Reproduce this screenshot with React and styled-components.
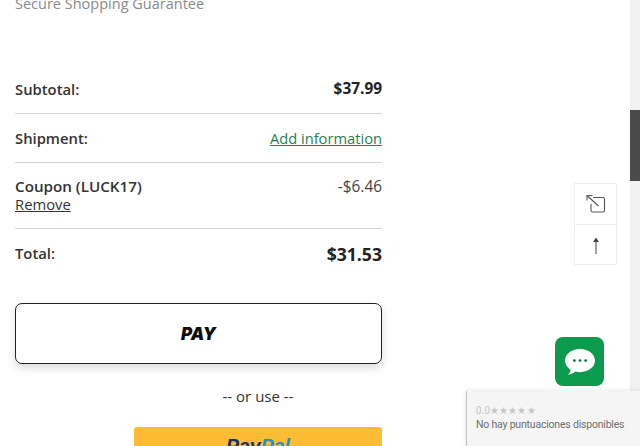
import React from 'react';
import styled, { createGlobalStyle } from 'styled-components';

const GlobalStyle = createGlobalStyle`
    html, body {
        margin: 0;
        height: 446px;
        overflow: hidden;
        background: #fff;
        font-family: "Open Sans", "Liberation Sans", sans-serif;
        color: #222;
    }
`;

const Page = styled.div`
    position: relative;
    display: flex;
    width: 640px;
    height: 446px;
    overflow: hidden;
`;

const Main = styled.main`
    flex: 1;
    padding: 0 0 0 15px;
    margin-top: -6px;
`;

const Column = styled.div`
    width: 367px;
`;

const Guarantee = styled.div`
    font-size: 14.5px;
    line-height: 20px;
    color: #8a8a8a;
    margin-bottom: 51px;
`;

const Row = styled.div`
    display: flex;
    justify-content: space-between;
    align-items: ${(props) => props.top ? 'flex-start' : 'center'};
    height: ${(props) => props.height}px;
    padding-top: ${(props) => props.pad || 0}px;
    box-sizing: border-box;
    border-bottom: ${(props) => props.last ? 'none' : '1px solid #d2d2d2'};
    font-size: 14.8px;
`;

const Label = styled.span`
    font-weight: 600;
    font-size: ${(props) => props.size || 14.8}px;
    color: #333;
    line-height: 18px;
    display: block;
    margin-bottom: ${(props) => props.lift || 0}px;
`;

const Amount = styled.span`
    font-weight: ${(props) => props.light ? 400 : 700};
    font-size: ${(props) => props.size || 15.4}px;
    color: ${(props) => props.light ? '#444' : '#222'};
    line-height: 18px;
    margin-top: ${(props) => props.light ? 1 : 0}px;
`;

const GreenLink = styled.a`
    color: #1f8052;
    text-decoration: underline;
    font-size: 14.7px;
`;

const RemoveLink = styled.a`
    display: block;
    color: #333;
    text-decoration: underline;
    font-size: 14.8px;
    line-height: 18px;
`;

const PayButton = styled.button`
    display: block;
    width: 100%;
    height: 61px;
    margin-top: 24px;
    border: 1px solid #222;
    border-radius: 7px;
    background: #fff;
    box-shadow: 0 4px 10px rgba(0, 0, 0, 0.14);
    font-family: Inter, sans-serif;
    font-size: 17px;
    font-style: italic;
    font-weight: 900;
    color: #0c0c0c;
`;

const AltPay = styled.div`
    margin: 23px 0 0 119px;
    text-align: center;
`;

const OrUse = styled.div`
    font-size: 15px;
    line-height: 18px;
    color: #333;
    margin-bottom: 22px;
`;

const PayPalButton = styled.div`
    height: 40px;
    background: #fdbc36;
    border-radius: 3px;
    font-family: "Liberation Sans", sans-serif;
    font-size: 19.5px;
    font-style: italic;
    font-weight: 700;
    line-height: 38px;
    color: #14316f;
`;

const PayPalTail = styled.span`
    color: #1f94c4;
`;

const ScrollTrack = styled.div`
    width: 10px;
    background: #f1f1f1;
    padding-top: 110px;
`;

const ScrollThumb = styled.div`
    height: 71px;
    background: #4b4b4b;
`;

const ToolStack = styled.div`
    position: absolute;
    left: 574px;
    top: 183px;
    width: 43px;
    display: flex;
    flex-direction: column;
    background: #fff;
    border: 1px solid #eeeeee;
    box-sizing: border-box;
`;

const ToolButton = styled.div`
    height: 40px;
    box-sizing: border-box;
    display: flex;
    align-items: center;
    justify-content: center;
    border-top: ${(props) => props.divided ? '1px solid #eeeeee' : 'none'};
`;

const ChatButton = styled.div`
    position: absolute;
    left: 555px;
    top: 337px;
    width: 49px;
    height: 49px;
    border-radius: 8px;
    background: #0c9a4f;
    display: flex;
    align-items: center;
    justify-content: center;
`;

const Recaptcha = styled.div`
    position: absolute;
    left: 466px;
    top: 391px;
    width: 174px;
    height: 55px;
    box-sizing: border-box;
    padding: 13px 0 0 9px;
    background: #f5f5f5;
    border-left: 1px solid #c4c4c4;
    box-shadow: 0 0 5px rgba(0, 0, 0, 0.12);
    font-family: Roboto, "Liberation Sans", sans-serif;
`;

const Score = styled.div`
    font-size: 10px;
    line-height: 13px;
    color: #c6c6c6;
    letter-spacing: 0.1px;
`;

const NoRatings = styled.div`
    font-size: 10.5px;
    line-height: 14px;
    margin-top: 1px;
    color: #6e6e6e;
    white-space: nowrap;
    letter-spacing: -0.2px;
`;

export default function App() {
    return (
        <Page>
            <GlobalStyle />
            <Main>
                <Column>
                    <Guarantee>Secure Shopping Guarantee</Guarantee>
                    <Row height={49}>
                        <Label>Subtotal:</Label>
                        <Amount>$37.99</Amount>
                    </Row>
                    <Row height={49}>
                        <Label>Shipment:</Label>
                        <GreenLink>Add information</GreenLink>
                    </Row>
                    <Row height={66} top pad={14}>
                        <div>
                            <Label size={15.2}>Coupon (LUCK17)</Label>
                            <RemoveLink>Remove</RemoveLink>
                        </div>
                        <Amount light>-$6.46</Amount>
                    </Row>
                    <Row height={50} last>
                        <Label lift={2}>Total:</Label>
                        <Amount size={17.6}>$31.53</Amount>
                    </Row>
                    <PayButton>PAY</PayButton>
                    <AltPay>
                        <OrUse>-- or use --</OrUse>
                        <PayPalButton>
                            Pay<PayPalTail>Pal</PayPalTail>
                        </PayPalButton>
                    </AltPay>
                </Column>
            </Main>
            <ScrollTrack>
                <ScrollThumb />
            </ScrollTrack>
            <ToolStack>
                <ToolButton>
                    <svg width="22" height="22" viewBox="0 0 22 22" fill="none" stroke="#555" strokeWidth="1.1">
                        <path d="M8 4.5h10a1.5 1.5 0 0 1 1.5 1.5v11.5a1.5 1.5 0 0 1-1.5 1.5H7.5A1.5 1.5 0 0 1 6 17.5V11" />
                        <path d="M13.5 13L2.5 3" />
                        <path d="M2 7.5V2.5H7.5" />
                    </svg>
                </ToolButton>
                <ToolButton divided>
                    <svg width="14" height="22" viewBox="0 0 14 22" fill="none" stroke="#555" strokeWidth="1.1">
                        <path d="M7 20V5" />
                        <path d="M4 8L7 3.5l3 4.5z" fill="#444" stroke="none" />
                    </svg>
                </ToolButton>
            </ToolStack>
            <ChatButton>
                <svg width="34" height="30" viewBox="0 0 36 32">
                    <path d="M18 2C8.6 2 2 7.6 2 14.5c0 4.2 2.4 7.7 6 10-.3 2-1.4 3.8-3 5 3.2-.2 6-1.4 8-3.3 1.6.4 3.2.6 5 .6 9.4 0 16-5.6 16-12.3S27.4 2 18 2z" fill="#fff" />
                    <circle cx="12" cy="14.5" r="1.5" fill="#0c7a45" />
                    <circle cx="18" cy="14.5" r="1.5" fill="#0c7a45" />
                    <circle cx="24" cy="14.5" r="1.5" fill="#0c7a45" />
                </svg>
            </ChatButton>
            <Recaptcha>
                <Score>0.0★★★★★</Score>
                <NoRatings>No hay puntuaciones disponibles</NoRatings>
            </Recaptcha>
        </Page>
    );
}
